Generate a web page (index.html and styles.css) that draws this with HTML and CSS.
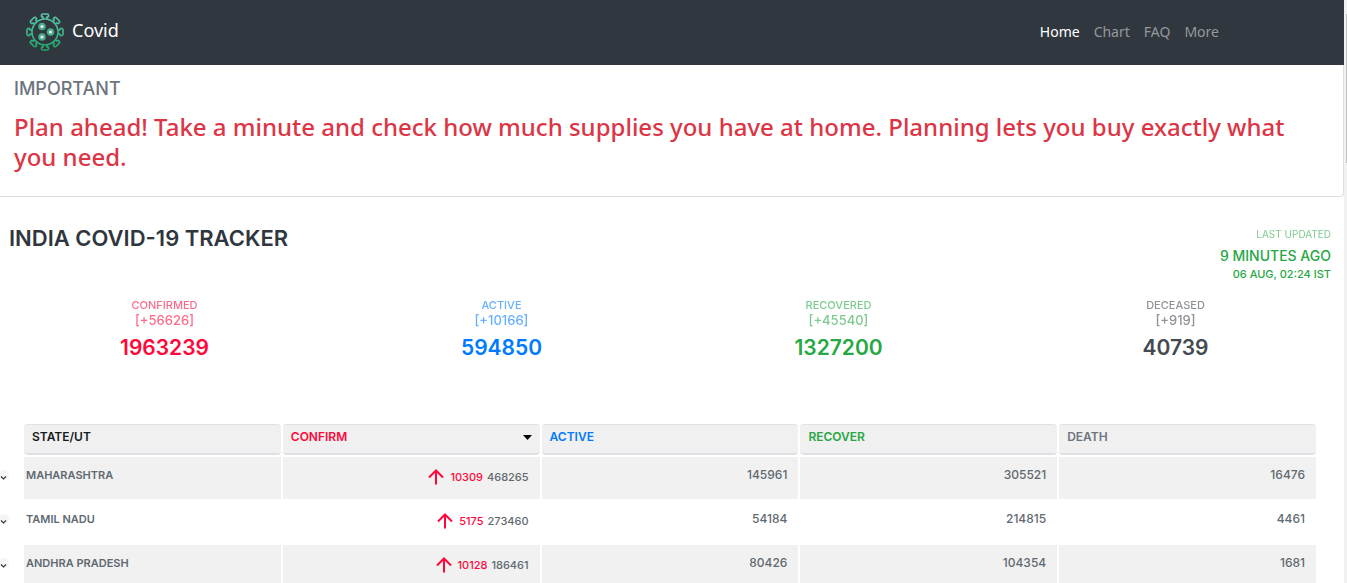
FILE: index.html
```html
<!DOCTYPE html>
<html lang="en">
<head>
<meta charset="utf-8">
<meta name="viewport" content="width=device-width, initial-scale=1">
<title>Covid</title>
<link rel="stylesheet" href="styles.css">
</head>
<body>
<div class="window">
<div class="page">
  <header class="navbar">
    <a class="brand" href="#">
      <svg class="logo" viewBox="0 0 38 38" aria-hidden="true">
        <defs>
          <linearGradient id="green" x1="0" y1="0" x2="0" y2="1"><stop offset="0" stop-color="#5cc3ae"/><stop offset="1" stop-color="#1da362"/></linearGradient>
          <path id="spike" d="M17.2 6V4.4L15.6 3.6Q14.8 1 17.2 1H20.8Q23.2 1 22.4 3.6L20.8 4.4V6"/>
          <mask id="virus" maskUnits="userSpaceOnUse" x="0" y="0" width="38" height="38">
            <g fill="none" stroke="#fff" stroke-width="1.7">
              <circle cx="19" cy="19" r="13"/>
              <use href="#spike"/><use href="#spike" transform="rotate(45 19 19)"/><use href="#spike" transform="rotate(90 19 19)"/><use href="#spike" transform="rotate(135 19 19)"/><use href="#spike" transform="rotate(180 19 19)"/><use href="#spike" transform="rotate(225 19 19)"/><use href="#spike" transform="rotate(270 19 19)"/><use href="#spike" transform="rotate(315 19 19)"/>
            </g>
          </mask>
        </defs>
        <rect width="38" height="38" fill="url(#green)" mask="url(#virus)"/>
        <g fill="#e9edf0" stroke="#46ad8b" stroke-width="2.2">
          <circle cx="16" cy="13.500" r="2.700"/><circle cx="24.500" cy="19" r="2.700"/><circle cx="16" cy="24" r="2.700"/>
        </g>
      </svg>
      <span>Covid</span>
    </a>
    <nav class="nav">
      <a class="active" href="#">Home</a><a href="#">Chart</a><a href="#">FAQ</a><a href="#">More</a>
    </nav>
  </header>

  <section class="notice">
    <h2>IMPORTANT</h2>
    <p>Plan ahead! Take a minute and check how much supplies you have at home. Planning lets you buy exactly what you need.</p>
  </section>

  <main>
    <div class="heading">
      <h1>INDIA COVID-19 TRACKER</h1>
      <div class="updated">
        <span class="label">LAST UPDATED</span>
        <span class="ago">9 MINUTES AGO</span>
        <span class="time">06 AUG, 02:24 IST</span>
      </div>
    </div>

    <div class="stats">
      <div class="stat red"><span class="name">CONFIRMED</span><span class="delta">[+56626]</span><span class="total">1963239</span></div>
      <div class="stat blue"><span class="name">ACTIVE</span><span class="delta">[+10166]</span><span class="total">594850</span></div>
      <div class="stat green"><span class="name">RECOVERED</span><span class="delta">[+45540]</span><span class="total">1327200</span></div>
      <div class="stat gray"><span class="name">DECEASED</span><span class="delta">[+919]</span><span class="total">40739</span></div>
    </div>

    <div class="table-wrap">
      <table class="states">
        <colgroup><col class="toggle-col"><col><col><col><col><col></colgroup>
        <thead>
          <tr><td></td><th>STATE/UT</th><th class="red"><div class="sorted">CONFIRM <svg class="caret" viewBox="0 0 9 5" aria-hidden="true"><path d="M0 0H9L4.500 5Z"/></svg></div></th><th class="blue">ACTIVE</th><th class="green">RECOVER</th><th class="muted">DEATH</th></tr>
        </thead>
        <tbody>
          <tr>
            <td class="toggle"><button aria-label="Expand Maharashtra"><svg viewBox="0 0 10 10"><path d="M2 6.500L4.500 9L7 6.500"/></svg></button></td>
            <td class="state">MAHARASHTRA</td>
            <td class="confirm"><div><svg class="arrow" viewBox="0 0 16 16"><path d="M8 15.500V1M1 8.500L8 1.500L15 8.500"/></svg><span class="red">10309</span><span>468265</span></div></td>
            <td>145961</td><td>305521</td><td>16476</td>
          </tr>
          <tr>
            <td class="toggle"><button aria-label="Expand Tamil Nadu"><svg viewBox="0 0 10 10"><path d="M2 6.500L4.500 9L7 6.500"/></svg></button></td>
            <td class="state">TAMIL NADU</td>
            <td class="confirm"><div><svg class="arrow" viewBox="0 0 16 16"><path d="M8 15.500V1M1 8.500L8 1.500L15 8.500"/></svg><span class="red">5175</span><span>273460</span></div></td>
            <td>54184</td><td>214815</td><td>4461</td>
          </tr>
          <tr>
            <td class="toggle"><button aria-label="Expand Andhra Pradesh"><svg viewBox="0 0 10 10"><path d="M2 6.500L4.500 9L7 6.500"/></svg></button></td>
            <td class="state">ANDHRA PRADESH</td>
            <td class="confirm"><div><svg class="arrow" viewBox="0 0 16 16"><path d="M8 15.500V1M1 8.500L8 1.500L15 8.500"/></svg><span class="red">10128</span><span>186461</span></div></td>
            <td>80426</td><td>104354</td><td>1681</td>
          </tr>
        </tbody>
      </table>
    </div>
  </main>
</div>
<div class="scrollbar"><div class="thumb"></div></div>
</div>
</body>
</html>
```
FILE: styles.css
```css
* { box-sizing: border-box; }
body { margin: 0; background: #fff; color: #30363d; font-family: Inter, sans-serif; }
h1, h2, p { margin: 0; }
a { text-decoration: none; }
.window { display: flex; height: 100vh; overflow: hidden; }
.page { flex: 1; min-width: 0; overflow: hidden; }
.scrollbar { width: 3px; background: #f1f1f1; padding: 14px 0 0 2px; }
.thumb { height: 149px; background: #c1c1c1; }

.navbar { display: flex; align-items: center; justify-content: space-between; height: 65px; padding: 0 125px 2px 26px; background: #31373f; font-family: "Noto Sans", sans-serif; }
.brand { display: flex; align-items: flex-start; gap: 8px; color: #fff; font-size: 18px; line-height: 34px; }
.logo { width: 38px; height: 38px; }
.nav { display: flex; gap: 14px; font-size: 14px; line-height: 20px; }
.nav a { color: #95989c; }
.nav .active { color: #fff; }

.notice { padding: 12px 14px 24px; border: 1px solid #dfdfdf; border-top: 0; border-left: 0; border-radius: 0 0 4px 0; }
.notice h2 { color: #6c757d; font-size: 18px; font-weight: 500; line-height: 24px; margin-bottom: 11px; }
.notice p { color: #dc3545; font-family: "Noto Sans", sans-serif; font-size: 24px; font-weight: 500; line-height: 30px; }

.heading { display: flex; justify-content: space-between; padding: 26px 13px 0 9px; }
.heading h1 { font-size: 22px; font-weight: 600; line-height: 30px; }
.updated { display: flex; flex-direction: column; align-items: flex-end; color: #28a745; font-weight: 500; padding-top: 4px; }
.updated .label { font-size: 10px; font-weight: 400; line-height: 14px; opacity: .6; }
.updated .ago { font-size: 14px; line-height: 20px; margin-top: 5px; }
.updated .time { font-size: 11px; line-height: 16px; }

.stats { display: grid; grid-template-columns: repeat(4, 1fr); margin: 15px 0 0 -4px; }
.stat { display: flex; flex-direction: column; align-items: center; }
.stat .name { font-size: 11px; font-weight: 500; line-height: 16px; opacity: .6; }
.stat .delta { font-size: 13px; font-weight: 500; line-height: 14px; opacity: .6; }
.stat .total { font-size: 21px; font-weight: 600; line-height: 26px; margin-top: 8px; }
.red { color: #ff073a; }
.blue { color: #007bff; }
.green { color: #28a745; }
.gray { color: #434a52; }
.muted { color: #6c757d; }

.table-wrap { margin: 61px 26px 0 -4px; }
.states { width: 100%; table-layout: fixed; border-collapse: separate; border-spacing: 2px; font-size: 12px; font-weight: 500; }
.toggle-col { width: 24px; }
.states td, .states th { vertical-align: top; padding: 0; }
.states th { height: 31px; padding: 4px 8px; text-align: left; font-weight: 600; line-height: 16px; background: #f0f0f0; border: 1px solid #dee2e6; border-width: 1px 0 2px; border-radius: 4px; }
.states th:not([class]) { color: #161a1d; }
.sorted { display: flex; align-items: center; justify-content: space-between; }
.caret { width: 9px; height: 5px; fill: #000; }
.states tbody td { height: 42px; padding: 10px 11px 0 2px; text-align: right; line-height: 16px; color: #606970; }
.states tbody tr:nth-child(odd) td:not(.toggle) { background: #f1f1f1; }
.states tbody .state { text-align: left; font-size: 11px; font-weight: 600; }
.states tbody .toggle { padding: 13px 0 0 1px; text-align: left; line-height: 0; }
.toggle button { display: block; width: 10px; height: 10px; padding: 0; border: 0; border-radius: 5px; background: #f4f5f6; }
.toggle svg { display: block; width: 10px; height: 10px; fill: none; stroke: #343a40; stroke-width: 1.2; }
.confirm div { display: flex; align-items: center; justify-content: flex-end; gap: 4px; height: 20px; font-size: 11px; }
.confirm .red { color: #ff073a; }
.arrow { width: 16px; height: 16px; margin-right: 2px; fill: none; stroke: #ff073a; stroke-width: 2; }
```
